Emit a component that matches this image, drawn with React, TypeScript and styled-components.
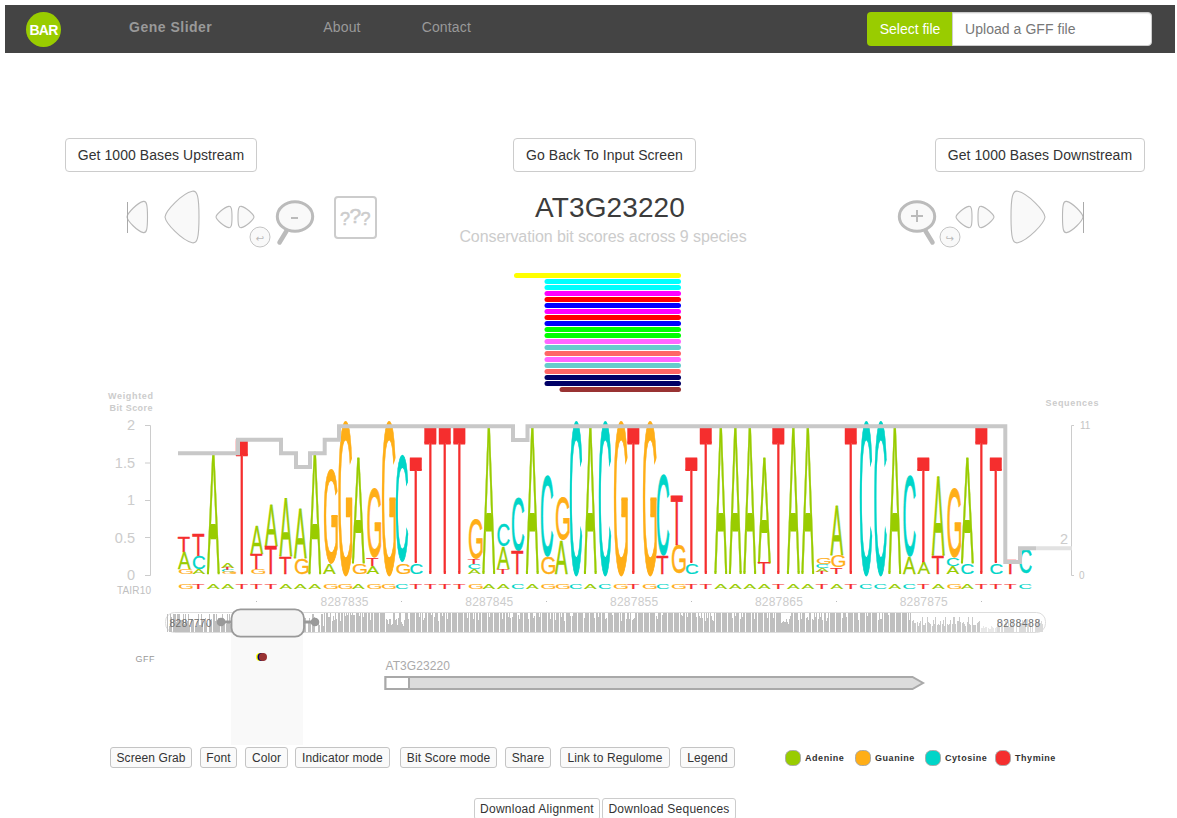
import React from "react";
import styled, { createGlobalStyle } from "styled-components";

const GlobalStyle = createGlobalStyle`
  *, *::before, *::after { box-sizing: border-box; }
  html, body { margin: 0; background: #fff; overflow: hidden; }
  body { font-family: "Liberation Sans", Arial, sans-serif; font-size: 14px; color: #333; }
`;

const Page = styled.div`
  display: flex;
  flex-direction: column;
  width: 1177px;
  height: 818px;
  padding-top: 5px;
  overflow: hidden;
`;

const NavBar = styled.nav`
  display: flex;
  align-items: flex-start;
  flex: none;
  height: 48px;
  margin: 0 2px 0 5px;
  padding: 7px 23px 0 21px;
  background: #444;
`;

const Logo = styled.div`
  display: flex;
  align-items: center;
  justify-content: center;
  width: 35px;
  height: 35px;
  border-radius: 50%;
  background: #9c0;
  color: #fff;
  font-size: 14px;
  font-weight: bold;
  letter-spacing: -0.7px;
`;

const NavLink = styled.a<{ $left: number; $brand?: boolean }>`
  margin-left: ${(p) => p.$left}px;
  line-height: 20px;
  padding-top: 5px;
  color: #999;
  font-weight: ${(p) => (p.$brand ? "bold" : "normal")};
  letter-spacing: ${(p) => (p.$brand ? "0.5px" : "0.15px")};
`;

const FileGroup = styled.div`
  display: flex;
  height: 34px;
  margin-left: auto;
  line-height: 34px;
`;

const SelectFile = styled.button`
  width: 86px;
  padding: 0;
  border: 0;
  border-radius: 4px 0 0 4px;
  background: #9c0;
  color: #fff;
  font: inherit;
`;

const FileField = styled.div`
  width: 200px;
  margin-left: -1px;
  padding-left: 12px;
  border: 1px solid #ccc;
  border-radius: 0 4px 4px 0;
  background: #fff;
  color: #777;
  line-height: 32px;
  letter-spacing: 0.05px;
  box-shadow: inset 0 1px 1px rgba(0, 0, 0, 0.075);
`;

const ActionRow = styled.div`
  display: flex;
  justify-content: space-between;
  flex: none;
  margin-top: 85px;
  padding: 0 32px 0 65px;
`;

const ActionButton = styled.button<{ $width: number; $shift?: number }>`
  width: ${(p) => p.$width}px;
  height: 34px;
  margin-left: ${(p) => p.$shift ?? 0}px;
  padding: 0;
  border: 1px solid #ccc;
  border-radius: 4px;
  background: #fff;
  color: #333;
  font: inherit;
  letter-spacing: 0.06px;
  white-space: nowrap;
`;

const ControlRow = styled.div`
  display: flex;
  flex: none;
  height: 93px;
  padding: 13px 0 0 120px;
`;

const ControlIcons = styled.svg`
  display: block;
  flex: none;
`;

const Heading = styled.header`
  width: 366px;
  text-align: center;
`;

const GeneTitle = styled.h1`
  margin: 6px 0 0 14px;
  font-size: 28px;
  font-weight: normal;
  line-height: 34px;
  letter-spacing: 0.1px;
  color: #3c3c3c;
`;

const GeneSubtitle = styled.p`
  margin: 3px 0 0;
  font-size: 16px;
  line-height: 18px;
  letter-spacing: -0.09px;
  color: #ccc;
  white-space: nowrap;
`;

const Chart = styled.svg`
  display: block;
  flex: none;
`;

const ToolRow = styled.div`
  display: flex;
  flex: none;
  margin-top: 2px;
  height: 21px;
  padding-left: 110px;
`;

const ToolButton = styled.button<{ $width: number; $gap: number }>`
  width: ${(p) => p.$width}px;
  height: 21px;
  margin-right: ${(p) => p.$gap}px;
  padding: 0;
  border: 1px solid #c4c4c4;
  border-radius: 3px;
  background: #fafafa;
  color: #333;
  font-family: inherit;
  font-size: 12px;
  letter-spacing: 0.1px;
  white-space: nowrap;
`;

const Legend = styled.div`
  display: flex;
  align-items: center;
  margin-left: 50px;
  height: 21px;
`;

const LegendItem = styled.div`
  display: flex;
  align-items: center;
  width: 70px;
  gap: 4px;
  color: #333;
  font-size: 9px;
  font-weight: bold;
  letter-spacing: 0.55px;
`;

const Swatch = styled.span<{ $color: string }>`
  width: 16px;
  height: 16px;
  border: 1px solid #aaa;
  border-radius: 6.5px;
  background: ${(p) => p.$color};
`;

const DownloadRow = styled.div`
  display: flex;
  flex: none;
  gap: 2px;
  margin-top: 30px;
  padding-left: 474px;
`;

const DownloadButton = styled.button<{ $width: number }>`
  width: ${(p) => p.$width}px;
  height: 22px;
  padding: 0;
  border: 1px solid #ccc;
  border-radius: 3px;
  background: #fff;
  color: #333;
  font-family: inherit;
  font-size: 12px;
  letter-spacing: 0.25px;
  white-space: nowrap;
`;

type Base = "A" | "C" | "G" | "T";

const COLORS: Record<Base, string> = { A: "#99cc00", G: "#ffae17", C: "#00d5c8", T: "#f52e2e" };

// Ink box of each stroked capital, in thousandths of an em, and the slot it fills in a column.
const GLYPHS: Record<Base, { x0: number; x1: number; y0: number; y1: number; dx: number; w: number }> = {
  A: { x0: -5, x1: 672, y0: -7, y1: 695, dx: 0, w: 12.8 },
  C: { x0: 43, x1: 688, y0: -17, y1: 705, dx: 0.4, w: 12.3 },
  G: { x0: 43, x1: 720, y0: -17, y1: 705, dx: 1.1, w: 14 },
  T: { x0: 15, x1: 596, y0: -7, y1: 695, dx: 0.1, w: 12 },
};

const FIRST_X = 177.8;
const PITCH = 14.5;
const FLOOR = 574;

function Letter({ base, column, top, bottom }: { base: Base; column: number; top: number; bottom: number }) {
  const g = GLYPHS[base];
  const sx = (g.w / (g.x1 - g.x0)) * 10;
  const sy = ((bottom - top) / (g.y1 - g.y0)) * 10;
  const x = FIRST_X + column * PITCH + g.dx - (g.x0 / 10) * sx;
  const y = bottom + (g.y0 / 10) * sy;
  return (
    <text
      transform={`translate(${x} ${y}) scale(${sx} ${sy})`}
      fontSize="100"
      fill={COLORS[base]}
      stroke={COLORS[base]}
      strokeWidth="1.4"
      strokeLinejoin="round"
    >
      {base}
    </text>
  );
}

// One entry per column: letters from top to bottom, each with its upper edge.
const STACKS: string[] = [
  "T536 A552 G569", "T534 C556 A569", "A451", "A563 T568 C570 G572", "T438", "A525 T554 G569",
  "A504 T546", "A498 T557", "A509 G558", "A451", "G469 A564", "G*", "A458 G563", "G488 T558 A566",
  "G*", "C456 G563", "T458 C563", "T*", "T*", "T*", "G519.5 T559 C564 A569", "A*", "C525 A547 T569",
  "C497 T551", "A*", "C475 G556.5", "G497 A540", "C*", "A*", "C*", "G*", "T*", "G*", "C475 T556",
  "T495 G545", "T458 C563", "T*", "A*", "A*", "A*", "A458 T563", "T*", "A*", "A*",
  "G557.5 C564 A568.5 T572", "A506 G555 T567", "T*", "C*", "C*", "A*", "C475 A556.7", "T458 A563",
  "A476 T556", "G488 C558 A566", "A458 C563", "T*", "T458 C563", "T560", "C549",
];

const REFERENCE = "GTAATTTAAAGGAGGCTTTTGAACAGGCACGTGCGTTAAAATAATATCCACTAGATTTC";

function Stack({ spec, column }: { spec: string; column: number }) {
  const parts = spec.split(" ");
  return (
    <>
      {parts.map((part, i) => {
        const base = part[0] as Base;
        const full = part[1] === "*";
        const round = base === "C" || base === "G";
        const top = full ? (round ? 422 : 425) : Number(part.slice(1));
        const bottom = full && round ? 577 : i + 1 < parts.length ? Number(parts[i + 1].slice(1)) : FLOOR;
        return <Letter key={i} base={base} column={column} top={top} bottom={bottom} />;
      })}
    </>
  );
}

const TRACKS: [number, string][] = [
  [514, "#ff0"], [544.5, "#0ff"], [544.5, "#0ff"], [544.5, "#f0f"], [544.5, "#f00"], [544.5, "#00f"],
  [544.5, "#f0f"], [544.5, "#f00"], [544.5, "#00f"], [544.5, "#0f0"], [544.5, "#0f0"], [544.5, "#f6f"],
  [544.5, "#6cc"], [544.5, "#f66"], [544.5, "#f6f"], [544.5, "#6cc"], [544.5, "#f66"], [544.5, "#006"],
  [544.5, "#006"], [559.5, "#933"],
];

// Conservation profile of the whole region, one bar per pixel column.
function overviewBars() {
  const bars: { x: number; h: number; c: string }[] = [];
  let seed = 4211;
  const next = () => {
    seed = (seed * 16807) % 2147483647;
    return seed / 2147483647;
  };
  for (let x = 167; x < 1043; x++) {
    const r = next();
    const s = next();
    let h: number;
    let c = "#bfbfbf";
    if (x < 324) {
      h = r < 0.22 ? 18 : r < 0.78 ? 6 + s * 9 : 0;
    } else if (x < 911) {
      const sparse = (x > 385 && x < 405) || (x > 780 && x < 790);
      if (sparse) h = r < 0.15 ? 19 : 6 + s * 8;
      else h = x % 6 === 1 ? 0 : r < 0.78 ? 19 : 11 + s * 6;
    } else if (x < 980) {
      h = x % 5 === 1 ? 0 : r < 0.15 ? 15 : 6 + s * 6;
      c = "#cacaca";
    } else if (x < 997) {
      h = x % 7 === 0 ? 0 : 3 + s * 3;
      c = "#e8e8e8";
    } else {
      h = r < 0.2 ? 0 : 5 + s * 8;
      c = "#dadada";
    }
    if (h > 0) bars.push({ x, h: Math.round(h), c });
  }
  return bars;
}

const LINE =
  "M178 453.3H238V439.7H281V453.3H296V467H310V453.3H324.7V439.7H339V426.3H513V440H527.5V426.3H1005.3V562H1020V548.3H1036";

function Label(props: { x: number; y: number; w: number; size: number; color: string; bold?: boolean; children: string }) {
  return (
    <text
      x={props.x}
      y={props.y}
      textLength={props.w}
      fontSize={props.size}
      fill={props.color}
      fontWeight={props.bold ? "bold" : "normal"}
    >
      {props.children}
    </text>
  );
}

function GeneChart() {
  return (
    <Chart width="1177" height="480" viewBox="0 265 1177 480">
      {TRACKS.map(([x, color], i) => (
        <rect key={i} x={x} y={273 + i * 6} width={681 - x} height="5" rx="2.5" fill={color} />
      ))}

      <Label x={108} y={399} w={45} size={9} color="#ccc" bold>Weighted</Label>
      <Label x={109.5} y={411} w={43} size={9} color="#ccc" bold>Bit Score</Label>
      <Label x={1045.5} y={406} w={53} size={9} color="#ccc" bold>Sequences</Label>
      <Label x={117} y={594} w={34} size={10} color="#c0c0c0">TAIR10</Label>

      <path d="M145 425.5H150.5V575.5H145M145 463H150.5M145 500.5H150.5M145 537.5H150.5" fill="none" stroke="#ccc" />
      {["2", "1.5", "1", "0.5", "0"].map((t, i) => (
        <text key={t} x="135" y={430 + i * 37.5} fontSize="14.5" textAnchor="end" fill="#ccc">{t}</text>
      ))}
      <path d="M1074 425.5H1071.5V575.5H1074" fill="none" stroke="#ccc" />
      <text x="1080" y="429" fontSize="10" fill="#c4c4c4">11</text>
      <text x="1079" y="579" fontSize="10" fill="#c4c4c4">0</text>
      <text x="1060" y="544" fontSize="14.5" fill="#ccc">2</text>

      {STACKS.map((spec, i) => <Stack key={i} spec={spec} column={i} />)}
      {REFERENCE.split("").map((b, i) => (
        <Letter key={i} base={b as Base} column={i} top={584} bottom={589} />
      ))}
      <path d="M1036 548.3H1072" stroke="#e2e2e2" strokeWidth="4" />
      <path d={LINE} fill="none" stroke="#c8c8c8" strokeWidth="4" />

      {[0, 1, 2, 3, 4].map((i) => (
        <Label key={i} x={320.5 + i * 144.8} y={606} w={48} size={12} color="#ccc">{String(8287835 + i * 10)}</Label>
      ))}
      {[0, 1, 2, 3, 4, 5].map((i) => (
        <rect key={i} x={256 + i * 145} y="601" width="1" height="1" fill="#bbb" />
      ))}

      <rect x="231" y="633" width="72" height="112" fill="#f9f9f9" />
      <rect x="165.5" y="612.5" width="880" height="20" rx="9" fill="#fff" stroke="#ddd" />
      <g shapeRendering="crispEdges">
        {overviewBars().map((b) => (
          <rect key={b.x} x={b.x} y={632 - b.h} width="1" height={b.h} fill={b.c} />
        ))}
      </g>
      <Label x={169.5} y={627} w={42} size={10} color="#707070">8287770</Label>
      <Label x={997} y={627} w={43} size={10} color="#707070">8288488</Label>
      <path d="M221 622H315" stroke="#999" strokeWidth="3" />
      <circle cx="221" cy="622" r="4.3" fill="#999" />
      <circle cx="315" cy="622" r="4.3" fill="#999" />
      <rect x="231.5" y="609.3" width="72.5" height="27.4" rx="9" fill="#f4f4f4" stroke="#999" strokeWidth="1.8" />

      <Label x={135.5} y={662} w={19} size={9} color="#999">GFF</Label>
      <circle cx="260" cy="657" r="4" fill="#ff0" />
      <circle cx="261.5" cy="657" r="4" fill="#006" />
      <circle cx="263" cy="657" r="4" fill="#933" />

      <Label x={385.5} y={670} w={64.5} size={12} color="#aaa">AT3G23220</Label>
      <path d="M385.5 677H912.5L923 683L912.5 689H385.5Z" fill="#dcdcdc" stroke="#a9a9a9" strokeWidth="2" />
      <rect x="385.5" y="677" width="23.5" height="12" fill="#fff" stroke="#a9a9a9" strokeWidth="2" />
    </Chart>
  );
}

// Rounded triangle whose tip points left, or right when flipped.
function Arrow({ x, w, h, flip }: { x: number; w: number; h: number; flip?: boolean }) {
  const t = -h / 2;
  const d = `M0 0C${w * 0.02} ${t * 0.25} ${w * 0.5} ${t * 0.9} ${w * 0.8} ${t * 0.99}C${w * 0.95} ${t * 1.03} ${w} ${t * 0.8} ${w} 0C${w} ${-t * 0.8} ${w * 0.95} ${-t * 1.03} ${w * 0.8} ${-t * 0.99}C${w * 0.5} ${-t * 0.9} ${w * 0.02} ${-t * 0.25} 0 0Z`;
  return (
    <path
      d={d}
      transform={flip ? `translate(${x + w} 217) scale(-1 1)` : `translate(${x} 217)`}
      fill="#f9f9f9"
      stroke="#b8b8b8"
      strokeWidth="1.1"
    />
  );
}

function LeftControls() {
  return (
    <ControlIcons width="300" height="65" viewBox="120 185 300 65">
      <Arrow x={127} w={20.5} h={31.5} />
      <path d="M127.5 202V233" stroke="#aaa" />
      <Arrow x={165} w={34} h={52} />
      <Arrow x={216} w={16} h={21.5} />
      <Arrow x={238} w={16} h={21.5} flip />
      <circle cx="260" cy="237" r="10" fill="#f9f9f9" stroke="#c4c4c4" />
      <text x="260" y="242" fontSize="10" textAnchor="middle" fill="#bbb" fontFamily="DejaVu Sans, sans-serif">↩</text>
      <path d="M286.5 231L279.5 242.5" stroke="#bbb" strokeWidth="4.5" strokeLinecap="round" />
      <ellipse cx="295" cy="216.5" rx="17.7" ry="14.8" fill="#f9f9f9" stroke="#bbb" strokeWidth="3" />
      <path d="M291 218H298" stroke="#bbb" strokeWidth="2" />
      <rect x="335" y="197" width="41" height="41" rx="3" fill="#fff" stroke="#ccc" strokeWidth="2" />
      <g fill="#ccc" stroke="#ccc" strokeWidth="0.5">
        <text x="340" y="225" fontSize="18">?</text>
        <text x="349.5" y="223" fontSize="21">?</text>
        <text x="360.5" y="225" fontSize="18">?</text>
      </g>
    </ControlIcons>
  );
}

function RightControls() {
  return (
    <ControlIcons width="310" height="65" viewBox="786 185 310 65">
      <path d="M925.5 231L932.5 242.5" stroke="#bbb" strokeWidth="4.5" strokeLinecap="round" />
      <ellipse cx="917" cy="216.5" rx="17.7" ry="14.8" fill="#f9f9f9" stroke="#bbb" strokeWidth="3" />
      <path d="M911 216H923M917 210V222" stroke="#bbb" strokeWidth="2" />
      <Arrow x={956} w={16} h={21.5} />
      <Arrow x={978} w={16} h={21.5} flip />
      <circle cx="950" cy="237" r="10" fill="#f9f9f9" stroke="#c4c4c4" />
      <text x="950" y="242" fontSize="10" textAnchor="middle" fill="#bbb" fontFamily="DejaVu Sans, sans-serif">↪</text>
      <Arrow x={1011} w={34} h={52} flip />
      <Arrow x={1062.5} w={20.5} h={31.5} flip />
      <path d="M1083.5 202V233" stroke="#aaa" />
    </ControlIcons>
  );
}

const TOOLS: [string, number, number][] = [
  ["Screen Grab", 82, 8], ["Font", 37, 8], ["Color", 43, 7], ["Indicator mode", 95, 10],
  ["Bit Score mode", 97, 8], ["Share", 46, 9], ["Link to Regulome", 110, 10], ["Legend", 55, 0],
];

const BASES: [string, Base][] = [["Adenine", "A"], ["Guanine", "G"], ["Cytosine", "C"], ["Thymine", "T"]];

export default function App() {
  return (
    <Page>
      <GlobalStyle />
      <NavBar>
        <Logo>BAR</Logo>
        <NavLink $left={68} $brand>Gene Slider</NavLink>
        <NavLink $left={111}>About</NavLink>
        <NavLink $left={61}>Contact</NavLink>
        <FileGroup>
          <SelectFile>Select file</SelectFile>
          <FileField>Upload a GFF file</FileField>
        </FileGroup>
      </NavBar>
      <ActionRow>
        <ActionButton $width={192}>Get 1000 Bases Upstream</ActionButton>
        <ActionButton $width={183} $shift={17}>Go Back To Input Screen</ActionButton>
        <ActionButton $width={210}>Get 1000 Bases Downstream</ActionButton>
      </ActionRow>
      <ControlRow>
        <LeftControls />
        <Heading>
          <GeneTitle>AT3G23220</GeneTitle>
          <GeneSubtitle>Conservation bit scores across 9 species</GeneSubtitle>
        </Heading>
        <RightControls />
      </ControlRow>
      <GeneChart />
      <ToolRow>
        {TOOLS.map(([name, width, gap]) => (
          <ToolButton key={name} $width={width} $gap={gap}>{name}</ToolButton>
        ))}
        <Legend>
          {BASES.map(([name, base]) => (
            <LegendItem key={name}>
              <Swatch $color={COLORS[base]} />
              {name}
            </LegendItem>
          ))}
        </Legend>
      </ToolRow>
      <DownloadRow>
        <DownloadButton $width={126}>Download Alignment</DownloadButton>
        <DownloadButton $width={134}>Download Sequences</DownloadButton>
      </DownloadRow>
    </Page>
  );
}
